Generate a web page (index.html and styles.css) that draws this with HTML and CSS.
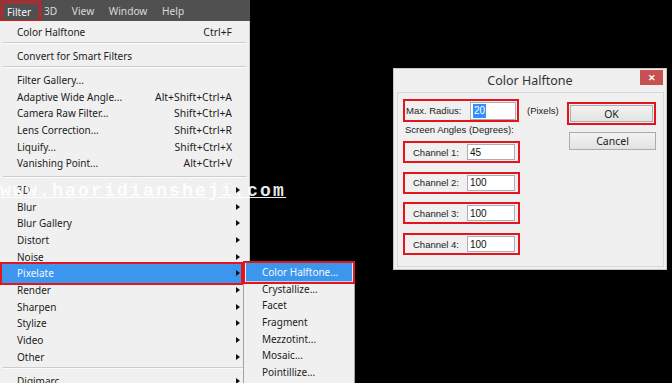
FILE: index.html
```html
<!DOCTYPE html>
<html>
<head>
<meta charset="utf-8">
<link rel="stylesheet" href="styles.css">
</head>
<body>
<div class="desktop">
  <div class="ps">
    <div class="menubar">
      <span class="mb mb-active">Filter</span>
      <span class="mb">3D</span>
      <span class="mb">View</span>
      <span class="mb">Window</span>
      <span class="mb">Help</span>
    </div>
    <div class="menu">
      <div class="mi"><span>Color Halftone</span><span class="sc">Ctrl+F</span></div>
      <div class="sep"></div>
      <div class="mi"><span>Convert for Smart Filters</span></div>
      <div class="sep"></div>
      <div class="mi"><span>Filter Gallery...</span></div>
      <div class="mi"><span>Adaptive Wide Angle...</span><span class="sc">Alt+Shift+Ctrl+A</span></div>
      <div class="mi"><span>Camera Raw Filter...</span><span class="sc">Shift+Ctrl+A</span></div>
      <div class="mi"><span>Lens Correction...</span><span class="sc">Shift+Ctrl+R</span></div>
      <div class="mi"><span>Liquify...</span><span class="sc">Shift+Ctrl+X</span></div>
      <div class="mi"><span>Vanishing Point...</span><span class="sc">Alt+Ctrl+V</span></div>
      <div class="sep sep-wide"></div>
      <div class="mi"><span>3D</span><i class="arr"></i></div>
      <div class="mi"><span>Blur</span><i class="arr"></i></div>
      <div class="mi"><span>Blur Gallery</span><i class="arr"></i></div>
      <div class="mi"><span>Distort</span><i class="arr"></i></div>
      <div class="mi"><span>Noise</span><i class="arr"></i></div>
      <div class="mi hl"><span>Pixelate</span><i class="arr"></i></div>
      <div class="mi"><span>Render</span><i class="arr"></i></div>
      <div class="mi"><span>Sharpen</span><i class="arr"></i></div>
      <div class="mi"><span>Stylize</span><i class="arr"></i></div>
      <div class="mi"><span>Video</span><i class="arr"></i></div>
      <div class="mi"><span>Other</span><i class="arr"></i></div>
      <div class="sep"></div>
      <div class="mi"><span>Digimarc</span><i class="arr"></i></div>
    </div>
  </div>

  <div class="submenu">
    <div class="si hl-sub">Color Halftone...</div>
    <div class="si">Crystallize...</div>
    <div class="si">Facet</div>
    <div class="si">Fragment</div>
    <div class="si">Mezzotint...</div>
    <div class="si">Mosaic...</div>
    <div class="si">Pointillize...</div>
  </div>

  <div class="watermark">www.haoridiansheji.com</div>

  <div class="dialog">
    <div class="dlg-title">Color Halftone<span class="close">&#x2715;</span></div>
    <div class="dlg-body">
      <div class="form">
        <div class="maxline">
          <div class="rbox r-max"><span class="lbl-max">Max. Radius:</span><span class="inp inp-max"><span class="sel">20</span></span></div>
          <span class="unit">(Pixels)</span>
        </div>
        <div class="angles">Screen Angles (Degrees):</div>
        <div class="rbox r-ch"><span class="lbl-ch">Channel 1:</span><span class="inp inp-ch">45</span></div>
        <div class="rbox r-ch"><span class="lbl-ch">Channel 2:</span><span class="inp inp-ch">100</span></div>
        <div class="rbox r-ch"><span class="lbl-ch">Channel 3:</span><span class="inp inp-ch">100</span></div>
        <div class="rbox r-ch"><span class="lbl-ch">Channel 4:</span><span class="inp inp-ch">100</span></div>
      </div>
      <div class="btns">
        <div class="rbox r-ok"><span class="btn btn-ok">OK</span></div>
        <span class="btn btn-cancel">Cancel</span>
      </div>
    </div>
  </div>
</div>
</body>
</html>
```

FILE: styles.css
```css
html, body {
  margin: 0;
  padding: 0;
  background: #000;
}

.desktop {
  position: relative;
  width: 672px;
  height: 383px;
  overflow: hidden;
  background: #000;
  font-family: "Noto Sans", "Open Sans", sans-serif;
}

/* ---------- Photoshop menu ---------- */
.ps {
  width: 250px;
}

.menubar {
  height: 21px;
  background: #505050;
  display: flex;
  align-items: stretch;
  padding-left: 1px;
}

.mb {
  display: flex;
  align-items: center;
  padding: 1px 7.3px 0 7.3px;
  font-size: 10.2px;
  color: #dadada;
}

.mb-active {
  position: relative;
  z-index: 1;
  color: #f6f6f6;
  padding-left: 4px;
  padding-right: 8px;
  margin-top: 1px;
  margin-right: -4.5px;
  border: 2px solid #e3141c;
  border-bottom-width: 1px;
}

.menu {
  width: 250px;
  height: 362px;
  box-sizing: border-box;
  background: #f0f0f0;
  border-right: 1px solid #c8c8c8;
  padding-top: 2.65px;
  font-size: 10px;
  color: #1c1c1c;
}

.mi {
  position: relative;
  height: 16.7px;
  display: flex;
  align-items: center;
  margin: 0 8px 0 2px;
  padding: 0 9px 0 15px;
  white-space: nowrap;
}

.sc {
  margin-left: auto;
  font-size: 10.4px;
}

.arr {
  margin-left: auto;
  margin-right: -8px;
  width: 0;
  height: 0;
  border-left: 4px solid #111;
  border-top: 3.5px solid transparent;
  border-bottom: 3.5px solid transparent;
}

.sep {
  height: 7.3px;
  box-sizing: border-box;
  padding-top: 1.7px;
  margin: 0 2px 0 3px;
}

.sep::before {
  content: "";
  display: block;
  border-top: 1px solid #cdcdcd;
  border-bottom: 1px solid #fbfbfb;
}

.sep-wide {
  height: 9.85px;
  padding-top: 4px;
}

.hl {
  background: #3d96ee;
  color: #f2f7ff;
  box-shadow: 0 -1.3px 0 #3d96ee, 0 1.3px 0 #3d96ee;
}

.hl::after {
  content: "";
  position: absolute;
  left: -2px;
  right: -2px;
  top: -2.7px;
  bottom: -3px;
  border: 2px solid #e3141c;
}

/* ---------- Submenu ---------- */
.submenu {
  position: absolute;
  left: 243px;
  top: 262px;
  width: 112px;
  height: 130px;
  box-sizing: border-box;
  background: #f0f0f0;
  border: 1px solid #a3a3a3;
  padding-top: 0.65px;
  font-size: 10px;
  color: #1c1c1c;
}

.si {
  position: relative;
  height: 16.7px;
  display: flex;
  align-items: center;
  padding-left: 18px;
  white-space: nowrap;
}

.hl-sub {
  margin: 0 2px;
  padding-left: 16px;
  background: #3d96ee;
  color: #f2f7ff;
  box-shadow: 0 -1.3px 0 #3d96ee, 0 1.3px 0 #3d96ee;
}

.hl-sub::after {
  content: "";
  position: absolute;
  left: -3px;
  right: -3px;
  top: -2.65px;
  bottom: -3.6px;
  border: 2px solid #e3141c;
}

/* ---------- Watermark ---------- */
.watermark {
  position: absolute;
  left: 0;
  top: 181px;
  font-family: "Liberation Mono", monospace;
  font-weight: bold;
  font-size: 18px;
  line-height: 20px;
  letter-spacing: 2.2px;
  color: rgba(255, 255, 255, 0.92);
  text-decoration: underline;
  white-space: nowrap;
}

/* ---------- Dialog ---------- */
.dialog {
  position: absolute;
  left: 393px;
  top: 68px;
  width: 274px;
  height: 202px;
  box-sizing: border-box;
  background: #f0f0f0;
  border: 1px solid #c6c6c6;
  display: flex;
  flex-direction: column;
  font-family: "Liberation Sans", Arial, sans-serif;
  font-size: 9.5px;
  color: #222;
}

.dlg-title {
  position: relative;
  height: 23px;
  flex: none;
  display: flex;
  align-items: center;
  justify-content: center;
  font-family: "Noto Sans", "Open Sans", sans-serif;
  font-size: 12.5px;
  color: #333;
}

.close {
  position: absolute;
  right: 3px;
  top: 1px;
  width: 23px;
  height: 15px;
  background: #c75050;
  color: #fff;
  font-size: 9px;
  font-weight: bold;
  display: flex;
  align-items: center;
  justify-content: center;
}

.dlg-body {
  flex: 1;
  margin: 0 2px 2px 3px;
  border: 1px solid #d9d9d9;
  display: flex;
  padding: 6px 7px 0 5px;
}

.form {
  flex: 1;
  display: flex;
  flex-direction: column;
}

.rbox {
  display: flex;
  align-items: center;
  box-sizing: border-box;
  border: 2px solid #e3141c;
}

.maxline {
  display: flex;
  align-items: center;
  gap: 8px;
}

.r-max {
  width: 116px;
  height: 23px;
}

.lbl-max {
  padding-left: 1px;
}

.inp {
  box-sizing: border-box;
  background: #fff;
  border: 1px solid #abadb3;
  display: flex;
  align-items: center;
  padding-left: 2px;
  margin-left: auto;
  font-size: 10px;
  color: #111;
}

.inp-max {
  width: 46px;
  height: 18px;
  margin-right: 1px;
}

.sel {
  background: #3390ff;
  color: #fff;
  padding: 1px 1px;
  line-height: 12px;
}

.unit {
  margin-top: -1px;
}

.angles {
  height: 12px;
  line-height: 12px;
  margin: 2px 0 5px 2px;
}

.r-ch {
  width: 117px;
  height: 22px;
  margin-bottom: 8.7px;
}

.lbl-ch {
  padding-left: 8px;
}

.inp-ch {
  width: 48px;
  height: 16px;
  margin-right: 3px;
}

.btns {
  width: 89px;
  display: flex;
  flex-direction: column;
  align-items: flex-end;
  padding-top: 3px;
}

.r-ok {
  width: 89px;
  height: 23px;
  padding: 1px;
}

.btn {
  box-sizing: border-box;
  display: flex;
  align-items: center;
  justify-content: center;
  background: linear-gradient(#f2f2f2, #e3e3e3);
  border: 1px solid #acacac;
  font-family: "Noto Sans", "Open Sans", sans-serif;
  font-size: 10.5px;
  color: #222;
}

.btn-ok {
  width: 100%;
  height: 100%;
}

.btn-cancel {
  width: 87px;
  height: 18px;
  margin-top: 7px;
}
```
